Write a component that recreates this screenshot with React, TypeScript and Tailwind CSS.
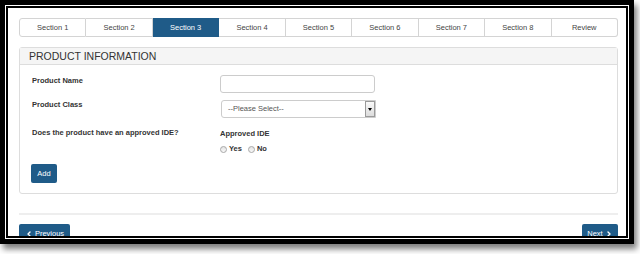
import { ChevronLeft, ChevronRight } from "lucide-react";

const TABS = [
  "Section 1",
  "Section 2",
  "Section 3",
  "Section 4",
  "Section 5",
  "Section 6",
  "Section 7",
  "Section 8",
  "Review",
];
const ACTIVE = "Section 3";

function Radio({ label }: { label: string }) {
  return (
    <label className="flex items-center gap-[2px] font-bold text-[7.5px] text-[#333]">
      <span className="w-[7px] h-[7px] rounded-full border border-[#a8a8a8] bg-gradient-to-b from-[#e4e4e4] to-[#f8f8f8]" />
      {label}
    </label>
  );
}

export default function App() {
  return (
    <div className="w-[640px] h-[254px] bg-white font-['Liberation_Sans',Arial,sans-serif] text-[#333]">
      {/* screenshot frame: thick black, thin white, thin black */}
      <div className="w-[634px] h-[244px] border-[5px] border-black bg-white p-px shadow-[3px_5px_6px_rgba(0,0,0,0.5)]">
        <div className="h-full border-2 border-black bg-white overflow-hidden pl-[11px] pr-[8px] pt-[10px]">
          {/* wizard tabs */}
          <div className="flex h-[19px]">
            {TABS.map((t, i) => (
              <div
                key={t}
                className={
                  "flex-1 flex items-center justify-center text-[7.5px] border-y border-r " +
                  (i === 0 ? "border-l rounded-l-[3px] " : "") +
                  (i === TABS.length - 1 ? "rounded-r-[3px] " : "") +
                  (t === ACTIVE
                    ? "bg-[#1f5b88] border-[#1f5b88] text-white"
                    : "bg-white border-[#d4d4d4] text-[#444]")
                }
              >
                {t}
              </div>
            ))}
          </div>

          {/* product information panel */}
          <div className="mt-[10px] border border-[#dddddd] rounded-[3px]">
            <div className="h-[17px] bg-[#f5f5f5] border-b border-[#dddddd] px-[9px] text-[10.5px] leading-[17px] text-[#333]">
              PRODUCT INFORMATION
            </div>
            <div className="px-[12px] pt-[10px] pb-[10px] text-[7.5px]">
              <div className="flex">
                <div className="w-[188px] font-bold leading-[10px] pt-px">Product Name</div>
                <div className="w-[155px] h-[18px] border border-[#cccccc] rounded-[3px] bg-white" />
              </div>
              <div className="flex mt-[7px]">
                <div className="w-[189px] font-bold leading-[10px]">Product Class</div>
                <div className="w-[155px] h-[18px] border border-[#cccccc] rounded-l-[3px] bg-white flex items-center">
                  <span className="flex-1 pl-[6px] text-[#555]">--Please Select--</span>
                  <span className="w-[10px] h-full border border-[#9a9a9a] bg-gradient-to-b from-[#fafafa] to-[#dcdcdc] flex items-center justify-center">
                    <span className="border-x-[2.5px] border-x-transparent border-t-[3px] border-t-black" />
                  </span>
                </div>
              </div>
              <div className="flex mt-[11px]">
                <div className="w-[188px] font-bold leading-[8px]">
                  Does the product have an approved IDE?
                </div>
                <div>
                  <div className="font-bold leading-[10px]">Approved IDE</div>
                  <div className="flex gap-[6px] mt-[5px] leading-[10px]">
                    <Radio label="Yes" />
                    <Radio label="No" />
                  </div>
                </div>
              </div>
              <button className="mt-[10px] w-[26px] h-[19px] bg-[#1f5b88] text-white text-[7.5px] rounded-[2px] -ml-px">
                Add
              </button>
            </div>
          </div>

          <div className="mt-[19px] border-t-2 border-[#eeeeee]" />

          {/* wizard navigation */}
          <div className="mt-[9px] flex justify-between">
            <button className="w-[51px] h-[20px] bg-[#1f5b88] text-white text-[7.5px] flex items-center justify-center gap-[2px] rounded-t-[2px]">
              <ChevronLeft size={8} strokeWidth={4} />
              Previous
            </button>
            <button className="w-[36px] h-[20px] bg-[#1f5b88] text-white text-[7.5px] flex items-center justify-center gap-[2px] rounded-t-[2px]">
              Next
              <ChevronRight size={8} strokeWidth={4} />
            </button>
          </div>
        </div>
      </div>
    </div>
  );
}
